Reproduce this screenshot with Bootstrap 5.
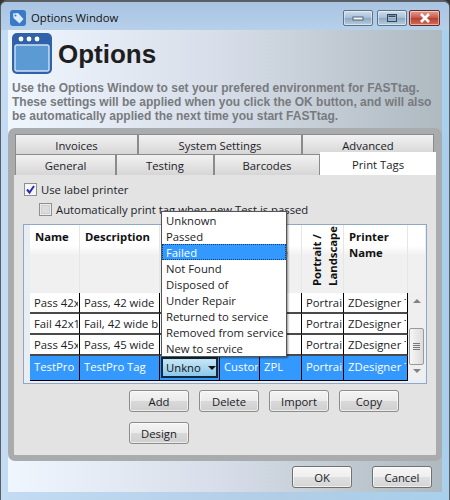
<!doctype html>
<html lang="en">
<head>
<meta charset="utf-8">
<title>Options Window</title>
<link href="https://cdn.jsdelivr.net/npm/bootstrap@5.3.0/dist/css/bootstrap.min.css" rel="stylesheet">
<style>
html,body{margin:0;width:450px;height:500px;overflow:hidden;background:#333;}
body{font:11.3px/16px "Open Sans","Noto Sans",sans-serif;color:#1c1c28;}
.win{width:450px;height:500px;border-radius:7px 7px 0 0;border:solid #5b5f63;border-width:2px 1px 0 1px;background:linear-gradient(90deg,#c3dcf4,#b2cde6 60%,#a8d0ec);overflow:hidden;}
.titlebar{height:28px;padding:8px 0 0 9px;background:linear-gradient(180deg,#a9c4e2,#b6d0ea);}
.wtitle{margin:0 0 0 5px;font-size:11.3px;line-height:16px;color:#111;}
.capbtns{margin:0 9px 0 auto;}
.cap{height:16px;border:1px solid #5e7388;border-radius:2px;display:flex;align-items:center;justify-content:center;background:linear-gradient(180deg,#cfdeee 0,#a9bfd6 48%,#8ea8c2 52%,#b8cde0 100%);box-shadow:inset 0 0 0 1px rgba(255,255,255,.45);}
.cap-min{width:30px;margin-right:4px;}
.cap-max{width:30px;margin-right:2px;}
.cap-close{width:31px;border-color:#6a2a24;background:linear-gradient(180deg,#e3a196 0,#c9594a 48%,#b63f30 52%,#d0705c 100%);}
.client{margin:0 7px;height:462px;background:linear-gradient(90deg,#f0f6fe,#d6dde8 50%,#aeb9c0);}
.headrow{padding:3px 0 0 4px;height:44px;}
.pagetitle{margin:0 0 0 6px;font:bold 26px/30px "Liberation Sans",Arial,sans-serif;color:#1e1e1e;}
.intro{margin:7px 0 0 4px;height:42px;font:bold 12px/14px "Liberation Sans",Arial,sans-serif;color:#777a7e;white-space:nowrap;}
.panelbox{margin-top:5px;height:333px;border:6px solid #a9abad;border-radius:7px;background:#e3e3e3;}
.tabline{height:20px;padding-left:1px;background:#a9abad;}
.tabline2{height:21px;padding-left:1px;background:#a9abad;}
.wtab{height:100%;flex:none;border:solid #8b8b8b;border-width:1px 1px 0 1px;background:linear-gradient(180deg,#f2f2f2,#d6d6d6);text-align:center;line-height:21px;color:#1c1c28;}
.wtab-on{height:23px;border:0;background:#fff;position:relative;z-index:1;margin-right:-2px;line-height:25px;}
.panelbody{padding:8px 9px 0;}
.chkrow{height:13px;line-height:13px;padding-left:1px;}
.chkrow2{margin:7px 0 0 15px;}
.chkrow svg{flex:none;margin-right:4px;}
.datawrap{position:relative;margin-top:8px;height:160px;border:1px solid #8fa9c4;background:#e9eef4;padding-left:6px;}
.gridarea{width:378px;flex:none;}
.dgrid{width:378px;table-layout:fixed;border-collapse:separate;border-spacing:0;margin:0;}
.dgrid th,.dgrid td{padding:0;overflow:hidden;white-space:nowrap;}
.dgrid th{height:68px;vertical-align:top;font-weight:700;font-size:11.3px;line-height:16px;background:linear-gradient(180deg,#fff 30%,#f0f0f0 45%);color:#111;border-right:1px solid #e6e6e6;padding:4px 0 0 5px;white-space:normal;}
.dgrid th.tightcell{padding-left:1px;}
.dgrid td{height:21px;background:#fff;border-right:1px solid #000;border-bottom:2px solid #4a4a4a;padding-left:4px;line-height:18px;color:#1c1c28;}
.dgrid td>div{overflow:hidden;margin-right:1px;}
.dgrid tr.picked td{height:25px;background:#3399ff;color:#fff;border-bottom:1px solid #000;line-height:20px;vertical-align:top;padding-top:1px;}
.dgrid tr.picked td.combocell{padding:1px 0 0 1px;color:#111;}
.combo{width:57px;height:21px;margin:0;border:2px solid #0f2a3e;background:linear-gradient(180deg,#c8e6f6,#8cc8ea);line-height:17px;padding-left:3px;display:flex;align-items:center;}
.combo span{width:38px;overflow:hidden;}
.combo i{margin-left:7px;border:solid transparent;border-width:4px 4px 0;border-top-color:#111;}
.rot{writing-mode:vertical-rl;transform:rotate(180deg);height:56px;line-height:16px;white-space:nowrap;}
.dgrid th.rotcell{padding:5px 0 0 7px;}
.vscroll{width:17px;flex:none;}
.vshead{height:68px;background:linear-gradient(180deg,#fff 30%,#f0f0f0 45%);}
.vstrack{height:87px;background:#efefef;display:flex;flex-direction:column;align-items:center;}
.arrowup,.arrowdn{width:0;height:0;border:solid transparent;border-width:0 4px 4px;border-bottom-color:#7d8388;margin-top:6px;}
.arrowdn{border-width:4px 4px 0;border-top-color:#7d8388;margin-top:4px;}
.thumb{width:15px;height:37px;margin-top:25px;border:1px solid #9a9a9a;border-radius:2px;background:linear-gradient(90deg,#f6f6f6,#dcdcdc);display:flex;flex-direction:column;gap:1px;align-items:center;justify-content:center;}
.thumb b{display:block;width:7px;height:1px;background:#777;}
.dropmenu{position:absolute;left:137px;top:-14px;width:126px;height:146px;z-index:5;background:#fff;border:1px solid #555;box-shadow:1px 1px 2px rgba(0,0,0,.45);color:#1c1c28;}
.dropmenu div{height:16px;line-height:18px;padding-left:4px;white-space:nowrap;}
.dropmenu .sel{background:#3399ff;color:#fff;outline:1px dotted #0b3d78;outline-offset:-1px;}
.actions{margin:6px 0 0 106px;width:290px;gap:10px;}
.winbtn{width:60px;height:22px;padding:0;border:1px solid #8c8c8c;border-radius:3px;font:11.3px/19px "Open Sans","Noto Sans",sans-serif;color:#1c1c28;background:linear-gradient(180deg,#f4f4f4 0,#ebebeb 48%,#d9d9d9 52%,#cfcfcf 100%);box-shadow:inset 0 0 0 1px rgba(255,255,255,.6);}
.foot{padding:5px 10px 0 0;gap:20px;}
.foot .winbtn{background:linear-gradient(180deg,#f6f6f6 0,#efefef 48%,#dfdfdf 52%,#d5d5d5 100%);border-color:#707070;}
</style>
</head>
<body>
<div class="win">
  <div class="titlebar d-flex align-items-start">
    <svg width="16" height="16" viewBox="0 0 16 16"><rect width="16" height="16" rx="3" fill="#3a78c8"/><path d="M3 3.5 8 3l5.5 6-4 4.5L3.5 8z" fill="#dceafa"/><circle cx="5.5" cy="5.5" r="1" fill="#3a78c8"/></svg>
    <div class="wtitle">Options Window</div>
    <div class="capbtns d-flex">
      <div class="cap cap-min"><svg width="12" height="6"><rect x="1" y="2" width="10" height="3" fill="#f4f6f8" stroke="#55677a"/></svg></div>
      <div class="cap cap-max"><svg width="12" height="10"><rect x="1.5" y="1.5" width="9" height="7" fill="none" stroke="#33465a"/><rect x="2.5" y="2.5" width="7" height="1.5" fill="#33465a"/></svg></div>
      <div class="cap cap-close"><svg width="12" height="10"><path d="M2 1l8 8M10 1l-8 8" stroke="#fff" stroke-width="2.6"/></svg></div>
    </div>
  </div>
  <div class="client">
    <div class="headrow d-flex align-items-center">
      <svg width="40" height="41" viewBox="0 0 40 41"><rect width="40" height="41" rx="5" fill="#2f62a8"/><rect x="3" y="12" width="34" height="26" rx="2" fill="#5b9ad2" stroke="#cfe2f4" stroke-width="1.4"/><circle cx="9" cy="6" r="2.4" fill="#fff"/><circle cx="17" cy="6" r="2.4" fill="#fff"/><circle cx="25" cy="6" r="2.4" fill="#fff"/></svg>
      <h1 class="pagetitle">Options</h1>
    </div>
    <p class="intro">Use the Options Window to set your prefered environment for FASTtag.<br>These settings will be applied when you click the OK button, and will also<br>be automatically applied the next time you start FASTtag.</p>
    <div class="panelbox">
      <div class="tabline d-flex">
        <div class="wtab" style="width:123px">Invoices</div>
        <div class="wtab" style="width:164px">System Settings</div>
        <div class="wtab" style="width:132px">Advanced</div>
      </div>
      <div class="tabline2 d-flex align-items-end">
        <div class="wtab" style="width:101px">General</div>
        <div class="wtab" style="width:98px">Testing</div>
        <div class="wtab" style="width:106px">Barcodes</div>
        <div class="wtab wtab-on" style="width:116px">Print Tags</div>
      </div>
      <div class="panelbody">
        <div class="chkrow d-flex align-items-center">
          <svg width="13" height="13" viewBox="0 0 13 13"><rect x=".5" y=".5" width="12" height="12" fill="#f6f6f6" stroke="#8e8f8f"/><path d="M3 6.5l2.5 3L10 3" fill="none" stroke="#2b2bb8" stroke-width="2"/></svg>
          <span>Use label printer</span>
        </div>
        <div class="chkrow chkrow2 d-flex align-items-center">
          <svg width="13" height="13" viewBox="0 0 13 13"><rect x=".5" y=".5" width="12" height="12" fill="#ececec" stroke="#8e8f8f"/><rect x="2.5" y="2.5" width="8" height="8" fill="#dcdcdc" stroke="#cfcfcf"/></svg>
          <span>Automatically print tag when new Test is passed</span>
        </div>
        <div class="datawrap d-flex">
          <div class="gridarea">
            <table class="dgrid">
              <colgroup><col style="width:50px"><col style="width:80px"><col style="width:60px"><col style="width:40px"><col style="width:42px"><col style="width:42px"><col style="width:64px"></colgroup>
              <thead><tr>
                <th>Name</th><th>Description</th><th>Status</th><th>Tag</th><th class="tightcell">Tag<br>Type</th>
                <th class="rotcell"><div class="rot">Portrait /<br>Landscape</div></th>
                <th>Printer Name</th>
              </tr></thead>
              <tbody>
                <tr><td><div>Pass 42x19</div></td><td><div>Pass, 42 wide b</div></td><td></td><td><div>Custom</div></td><td><div>ZPL</div></td><td><div>Portrait</div></td><td><div>ZDesigner TLP</div></td></tr>
                <tr><td><div>Fail 42x19</div></td><td><div>Fail, 42 wide by</div></td><td></td><td><div>Custom</div></td><td><div>ZPL</div></td><td><div>Portrait</div></td><td><div>ZDesigner TLP</div></td></tr>
                <tr><td><div>Pass 45x19</div></td><td><div>Pass, 45 wide b</div></td><td></td><td><div>Custom</div></td><td><div>ZPL</div></td><td><div>Portrait</div></td><td><div>ZDesigner TLP</div></td></tr>
                <tr class="picked"><td><div>TestPro</div></td><td><div>TestPro Tag</div></td><td class="combocell"><div class="combo"><span>Unknown</span><i></i></div></td><td><div>Custom</div></td><td><div>ZPL</div></td><td><div>Portrait</div></td><td><div>ZDesigner TLP</div></td></tr>
              </tbody>
            </table>
          </div>
          <div class="vscroll">
            <div class="vshead"></div>
            <div class="vstrack"><span class="arrowup"></span><div class="thumb"><b></b><b></b><b></b><b></b></div><span class="arrowdn"></span></div>
          </div>
          <div class="dropmenu">
            <div>Unknown</div><div>Passed</div><div class="sel">Failed</div><div>Not Found</div><div>Disposed of</div><div>Under Repair</div><div>Returned to service</div><div>Removed from service</div><div>New to service</div>
          </div>
        </div>
        <div class="actions d-flex flex-wrap">
          <button class="btn winbtn" type="button">Add</button>
          <button class="btn winbtn" type="button">Delete</button>
          <button class="btn winbtn" type="button">Import</button>
          <button class="btn winbtn" type="button">Copy</button>
          <button class="btn winbtn" type="button">Design</button>
        </div>
      </div>
    </div>
    <div class="foot d-flex justify-content-end">
      <button class="btn winbtn" type="button">OK</button>
      <button class="btn winbtn" type="button">Cancel</button>
    </div>
  </div>
</div>
</body>
</html>
